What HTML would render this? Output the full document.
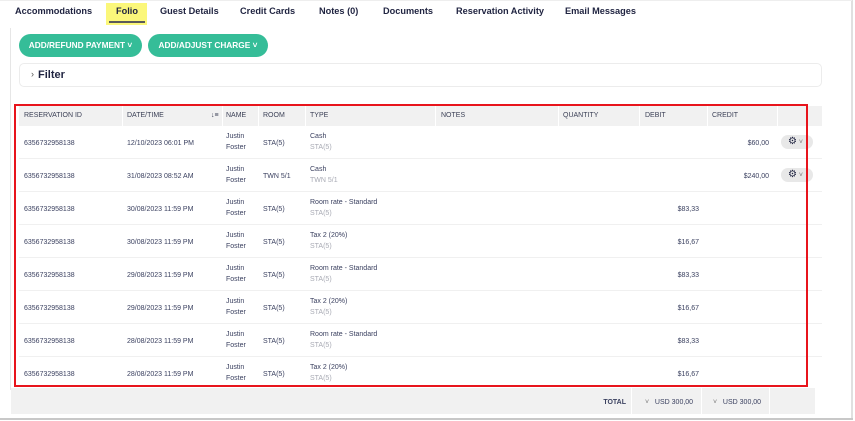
<!DOCTYPE html>
<html><head><meta charset="utf-8"><style>
*{margin:0;padding:0;box-sizing:border-box}
body{width:855px;height:421px;background:#fff;font-family:"Liberation Sans",sans-serif;position:relative;overflow:hidden;color:#2a2f45}
.a{position:absolute;white-space:nowrap}
.tab{position:absolute;top:4px;font-size:9.2px;font-weight:bold;color:#1f2340;line-height:14px}
.btn{position:absolute;top:34px;height:23px;border-radius:12px;background:#35bd98;color:#fff;font-size:8.3px;font-weight:bold;line-height:23px;text-align:center}
.hd{position:absolute;top:106px;height:20px;background:#f1f1f1;left:19px;width:803px}
.h{position:absolute;top:112px;font-size:7px;color:#3a3f55}
.row{position:absolute;left:19px;width:803px;height:33px;border-bottom:1px solid #f0f0f0}
.c{position:absolute;font-size:7px;color:#3b4160;line-height:11px}
.g{color:#a8aab4}
.sep{position:absolute;top:106px;width:1px;height:20px;background:#fff}
.gear{position:absolute;left:781px;width:32px;height:14px;border-radius:7px;background:#e8e8e8;font-size:10px;line-height:14px;padding-left:7px;color:#1f2340}
</style></head><body>
<div class="a" style="left:10px;top:28px;width:1px;height:362px;background:#e6e6e6"></div>
<div class="a" style="left:851px;top:0;width:2px;height:419px;background:#e0e0e0"></div>
<div class="a" style="left:0;top:418px;width:853px;height:2px;background:#c8c8c8"></div>
<div class="a" style="left:0;top:0;width:852px;height:1px;background:#eee"></div>

<div class="a" style="left:106px;top:3px;width:41px;height:22px;background:#fbf77a"></div>
<div class="a" style="left:109px;top:21px;width:36px;height:2px;background:#5a5a5a"></div>
<div class="tab" style="left:15px">Accommodations</div>
<div class="tab" style="left:116px">Folio</div>
<div class="tab" style="left:160px">Guest Details</div>
<div class="tab" style="left:240px">Credit Cards</div>
<div class="tab" style="left:319px">Notes (0)</div>
<div class="tab" style="left:383px">Documents</div>
<div class="tab" style="left:456px">Reservation Activity</div>
<div class="tab" style="left:565px">Email Messages</div>

<div class="btn" style="left:19px;width:123px">ADD/REFUND PAYMENT ˅</div>
<div class="btn" style="left:148px;width:120px">ADD/ADJUST CHARGE ˅</div>

<div class="a" style="left:19px;top:63px;width:803px;height:24px;border:1px solid #ececec;border-radius:5px"></div>
<div class="a" style="left:31px;top:69px;font-size:9px;color:#555">›</div>
<div class="a" style="left:38px;top:69px;font-size:11px;font-weight:bold;color:#1f2340">Filter</div>

<div class="hd"></div>
<div class="sep" style="left:122px"></div><div class="sep" style="left:222px"></div><div class="sep" style="left:258px"></div><div class="sep" style="left:305px"></div><div class="sep" style="left:435px"></div><div class="sep" style="left:558px"></div><div class="sep" style="left:639px"></div><div class="sep" style="left:707px"></div><div class="sep" style="left:777px"></div>
<div class="h" style="left:24px">RESERVATION ID</div>
<div class="h" style="left:127px">DATE/TIME</div>
<div class="h" style="left:211px;font-weight:bold">↓≡</div>
<div class="h" style="left:226px">NAME</div>
<div class="h" style="left:263px">ROOM</div>
<div class="h" style="left:310px">TYPE</div>
<div class="h" style="left:441px">NOTES</div>
<div class="h" style="left:563px">QUANTITY</div>
<div class="h" style="left:645px">DEBIT</div>
<div class="h" style="left:712px">CREDIT</div>

<div class="row" style="top:126px"></div>
<div class="c" style="left:24px;top:138px">6356732958138</div><div class="c" style="left:127px;top:138px">12/10/2023 06:01 PM</div><div class="c" style="left:226px;top:131px">Justin<br>Foster</div><div class="c" style="left:263px;top:138px">STA(5)</div><div class="c" style="left:310px;top:131px">Cash<br><span class="g">STA(5)</span></div><div class="c" style="left:710px;width:59px;text-align:right;top:138px">$60,00</div>
<div class="gear" style="top:135px">⚙<span style="font-size:7px;color:#777"> ˅</span></div>

<div class="row" style="top:159px"></div>
<div class="c" style="left:24px;top:171px">6356732958138</div><div class="c" style="left:127px;top:171px">31/08/2023 08:52 AM</div><div class="c" style="left:226px;top:164px">Justin<br>Foster</div><div class="c" style="left:263px;top:171px">TWN 5/1</div><div class="c" style="left:310px;top:164px">Cash<br><span class="g">TWN 5/1</span></div><div class="c" style="left:710px;width:59px;text-align:right;top:171px">$240,00</div>
<div class="gear" style="top:168px">⚙<span style="font-size:7px;color:#777"> ˅</span></div>

<div class="row" style="top:192px"></div>
<div class="c" style="left:24px;top:204px">6356732958138</div><div class="c" style="left:127px;top:204px">30/08/2023 11:59 PM</div><div class="c" style="left:226px;top:197px">Justin<br>Foster</div><div class="c" style="left:263px;top:204px">STA(5)</div><div class="c" style="left:310px;top:197px">Room rate - Standard<br><span class="g">STA(5)</span></div><div class="c" style="left:640px;width:59px;text-align:right;top:204px">$83,33</div>

<div class="row" style="top:225px"></div>
<div class="c" style="left:24px;top:237px">6356732958138</div><div class="c" style="left:127px;top:237px">30/08/2023 11:59 PM</div><div class="c" style="left:226px;top:230px">Justin<br>Foster</div><div class="c" style="left:263px;top:237px">STA(5)</div><div class="c" style="left:310px;top:230px">Tax 2 (20%)<br><span class="g">STA(5)</span></div><div class="c" style="left:640px;width:59px;text-align:right;top:237px">$16,67</div>

<div class="row" style="top:258px"></div>
<div class="c" style="left:24px;top:270px">6356732958138</div><div class="c" style="left:127px;top:270px">29/08/2023 11:59 PM</div><div class="c" style="left:226px;top:263px">Justin<br>Foster</div><div class="c" style="left:263px;top:270px">STA(5)</div><div class="c" style="left:310px;top:263px">Room rate - Standard<br><span class="g">STA(5)</span></div><div class="c" style="left:640px;width:59px;text-align:right;top:270px">$83,33</div>

<div class="row" style="top:291px"></div>
<div class="c" style="left:24px;top:303px">6356732958138</div><div class="c" style="left:127px;top:303px">29/08/2023 11:59 PM</div><div class="c" style="left:226px;top:296px">Justin<br>Foster</div><div class="c" style="left:263px;top:303px">STA(5)</div><div class="c" style="left:310px;top:296px">Tax 2 (20%)<br><span class="g">STA(5)</span></div><div class="c" style="left:640px;width:59px;text-align:right;top:303px">$16,67</div>

<div class="row" style="top:324px"></div>
<div class="c" style="left:24px;top:336px">6356732958138</div><div class="c" style="left:127px;top:336px">28/08/2023 11:59 PM</div><div class="c" style="left:226px;top:329px">Justin<br>Foster</div><div class="c" style="left:263px;top:336px">STA(5)</div><div class="c" style="left:310px;top:329px">Room rate - Standard<br><span class="g">STA(5)</span></div><div class="c" style="left:640px;width:59px;text-align:right;top:336px">$83,33</div>

<div class="row" style="top:357px;border-bottom:none"></div>
<div class="c" style="left:24px;top:369px">6356732958138</div><div class="c" style="left:127px;top:369px">28/08/2023 11:59 PM</div><div class="c" style="left:226px;top:362px">Justin<br>Foster</div><div class="c" style="left:263px;top:369px">STA(5)</div><div class="c" style="left:310px;top:362px">Tax 2 (20%)<br><span class="g">STA(5)</span></div><div class="c" style="left:640px;width:59px;text-align:right;top:369px">$16,67</div>

<div class="a" style="left:11px;top:388px;width:804px;height:26px;background:#f1f1f1"></div>
<div class="a" style="left:631px;top:388px;width:1px;height:26px;background:#fff"></div>
<div class="a" style="left:701px;top:388px;width:1px;height:26px;background:#fff"></div>
<div class="a" style="left:769px;top:388px;width:1px;height:26px;background:#fff"></div>
<div class="c" style="left:560px;width:66px;text-align:right;top:397px;font-weight:bold">TOTAL</div>
<div class="c" style="left:645px;top:397px"><span style="color:#777">˅</span>&nbsp;&nbsp; USD 300,00</div>
<div class="c" style="left:713px;top:397px"><span style="color:#777">˅</span>&nbsp;&nbsp; USD 300,00</div>

<div class="a" style="left:14px;top:104px;width:794px;height:283px;border:2px solid #e8141c"></div>
</body></html>
